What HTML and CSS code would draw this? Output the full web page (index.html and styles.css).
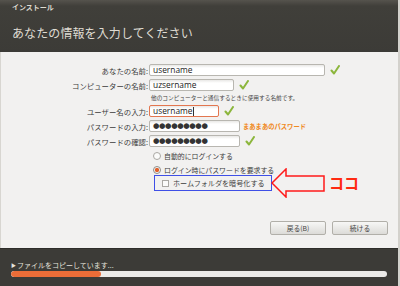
FILE: index.html
```html
<!DOCTYPE html>
<html lang="ja">

<head>
    <meta charset="UTF-8">
    <title>インストール</title>
    <link rel="stylesheet" href="styles.css">
</head>

<body>
    <div class="window">
        <header class="top">
            <div class="app-title">インストール</div>
            <h1>あなたの情報を入力してください</h1>
        </header>

        <main class="content">
            <div class="field first">
                <label>あなたの名前:</label>
                <div class="input w-name">username</div>
                <svg class="check" viewBox="0 0 10 10"><path d="M1.5 5.5 L4 8.5 L9 1" /></svg>
            </div>
            <div class="field">
                <label>コンピューターの名前:</label>
                <div class="input w-host">uzsername</div>
                <svg class="check" viewBox="0 0 10 10"><path d="M1.5 5.5 L4 8.5 L9 1" /></svg>
            </div>
            <div class="hint">他のコンピューターと通信するときに使用する名前です。</div>
            <div class="field">
                <label>ユーザー名の入力:</label>
                <div class="input w-user focused">username<span class="caret"></span></div>
                <svg class="check" viewBox="0 0 10 10"><path d="M1.5 5.5 L4 8.5 L9 1" /></svg>
            </div>
            <div class="field">
                <label>パスワードの入力:</label>
                <div class="input w-pass dots">●●●●●●●●●</div>
                <span class="strength">まあまあのパスワード</span>
            </div>
            <div class="field">
                <label>パスワードの確認:</label>
                <div class="input w-pass dots">●●●●●●●●●</div>
                <svg class="check" viewBox="0 0 10 10"><path d="M1.5 5.5 L4 8.5 L9 1" /></svg>
            </div>

            <div class="option">
                <span class="radio"></span>自動的にログインする
            </div>
            <div class="option">
                <span class="radio selected"></span>ログイン時にパスワードを要求する
            </div>
            <div class="encrypt-row">
                <div class="encrypt">
                    <span class="checkbox"></span>ホームフォルダを暗号化する
                </div>
                <svg class="arrow" viewBox="0 0 54 30">
                    <polygon points="1,15 15,1 15,8 53,8 53,23 15,23 15,29" />
                </svg>
                <span class="note">ココ</span>
            </div>

            <div class="actions">
                <button type="button">戻る(B)</button>
                <button type="button">続ける</button>
            </div>
        </main>

        <footer class="status">
            <div class="status-text"><span class="tri">▶</span>ファイルをコピーしています...</div>
            <div class="progress">
                <div class="progress-fill" style="width: 24%;"></div>
            </div>
        </footer>
    </div>
</body>

</html>
```

FILE: styles.css
```css
body {
    margin: 0;
    font-family: "Noto Sans CJK JP", "DejaVu Sans", sans-serif;
    background: #f2f1f0;
}

.window {
    width: 398px;
    height: 286px;
    border-right: 2px solid #d3d1cc;
    display: flex;
    flex-direction: column;
    background: #f2f1f0;
}

/* --- header --- */
.top {
    height: 52px;
    box-sizing: border-box;
    padding: 2px 12px 0;
    background: linear-gradient(#55534d 0, #403f3a 6px, #3c3b37 100%);
    color: #dfdbd2;
}

.app-title {
    font-size: 7px;
    font-weight: bold;
    line-height: 10px;
}

.top h1 {
    margin: 13px 0 0;
    font-size: 12px;
    font-weight: normal;
    line-height: 16px;
    letter-spacing: 0.1px;
}

/* --- form --- */
.content {
    flex: 1;
    display: flex;
    flex-direction: column;
    border-left: 1px solid #d8d6d1;
}

.field {
    display: flex;
    align-items: center;
    height: 12px;
    margin-top: 3px;
}

.field.first {
    margin-top: 12px;
}

.field label {
    width: 147px;
    padding-right: 1px;
    text-align: right;
    font-size: 7.4px;
    color: #3c3c3c;
    white-space: nowrap;
}

.input {
    height: 12px;
    box-sizing: border-box;
    border: 1px solid #b8b6b0;
    border-radius: 2px;
    background: linear-gradient(#e9e8e6 0, #ffffff 3px);
    padding: 0 3px;
    font-family: "Open Sans", "DejaVu Sans", sans-serif;
    font-size: 8.4px;
    line-height: 10px;
    color: #222;
    display: flex;
    align-items: center;
}

.input.focused {
    border-color: #e3764f;
}

.caret {
    display: inline-block;
    width: 1px;
    height: 9px;
    background: #333;
}

.w-name {
    width: 176px;
}

.w-host {
    width: 85px;
}

.w-user {
    width: 70px;
}

.w-pass {
    width: 91px;
}

.dots {
    font-family: "DejaVu Sans", sans-serif;
    font-size: 7.4px;
    letter-spacing: -0.4px;
    color: #333;
}

.check {
    width: 10px;
    height: 10px;
    margin-left: 5px;
}

.check path {
    fill: none;
    stroke: #8cb63c;
    stroke-width: 2;
    stroke-linecap: round;
    stroke-linejoin: round;
}

.strength {
    margin-left: 3px;
    font-size: 6.3px;
    font-weight: bold;
    color: #f08a24;
}

.hint {
    margin: 3px 0 0 150px;
    height: 8px;
    font-size: 5.7px;
    line-height: 8px;
    color: #444;
    white-space: nowrap;
}

/* --- login options --- */
.option {
    display: flex;
    align-items: center;
    height: 10px;
    margin: 4px 0 0 152px;
    font-size: 6.9px;
    color: #3c3c3c;
}

.radio {
    width: 6px;
    height: 6px;
    border: 1px solid #aaa8a3;
    border-radius: 50%;
    background: #fbfbfa;
    margin-right: 3px;
    flex: none;
}

.radio.selected {
    border-color: #8f8d88;
    background: radial-gradient(circle, #e2622d 0, #e2622d 45%, #f7f6f5 55%);
}

.encrypt-row {
    display: flex;
    align-items: center;
    height: 16px;
}

.encrypt {
    margin-left: 153px;
    width: 118px;
    height: 16px;
    box-sizing: border-box;
    border: 1px solid #3f4fe6;
    display: flex;
    align-items: center;
    padding-left: 7px;
    font-size: 7.1px;
    color: #3c3c3c;
}

.checkbox {
    width: 5px;
    height: 5px;
    border: 1px solid #aaa8a3;
    background: #fbfbfa;
    margin-right: 4px;
}

.arrow {
    width: 54px;
    height: 30px;
    margin: -7px 0 -7px -1px;
}

.arrow polygon {
    fill: #f2f1f0;
    stroke: #ff1a1a;
    stroke-width: 1.5;
}

.note {
    margin-left: 4px;
    font-size: 15px;
    font-weight: bold;
    color: #ff2a12;
    line-height: 16px;
}

/* --- buttons --- */
.actions {
    display: flex;
    justify-content: flex-end;
    gap: 6px;
    margin: 30px 10px 0 0;
}

.actions button {
    width: 56px;
    height: 14px;
    padding: 0;
    border: 1px solid #b1afa9;
    border-radius: 2px;
    background: linear-gradient(#f7f7f6, #dcdbd8);
    font-family: "Noto Sans CJK JP", sans-serif;
    font-size: 6.8px;
    color: #444;
}

/* --- status bar --- */
.status {
    height: 38px;
    box-sizing: border-box;
    padding: 11px 11px 0;
    background: #3c3b37;
    border-top: 1px solid #2e2d2a;
}

.status-text {
    font-size: 7px;
    line-height: 9px;
    color: #e6e3dd;
}

.tri {
    font-size: 5px;
    margin-right: 1px;
    vertical-align: 1px;
}

.progress {
    margin-top: 1px;
    height: 6px;
    border-radius: 3px;
    background: #ebeae8;
    overflow: hidden;
}

.progress-fill {
    height: 100%;
    border-radius: 3px;
    background: #ec6d38;
}
```
